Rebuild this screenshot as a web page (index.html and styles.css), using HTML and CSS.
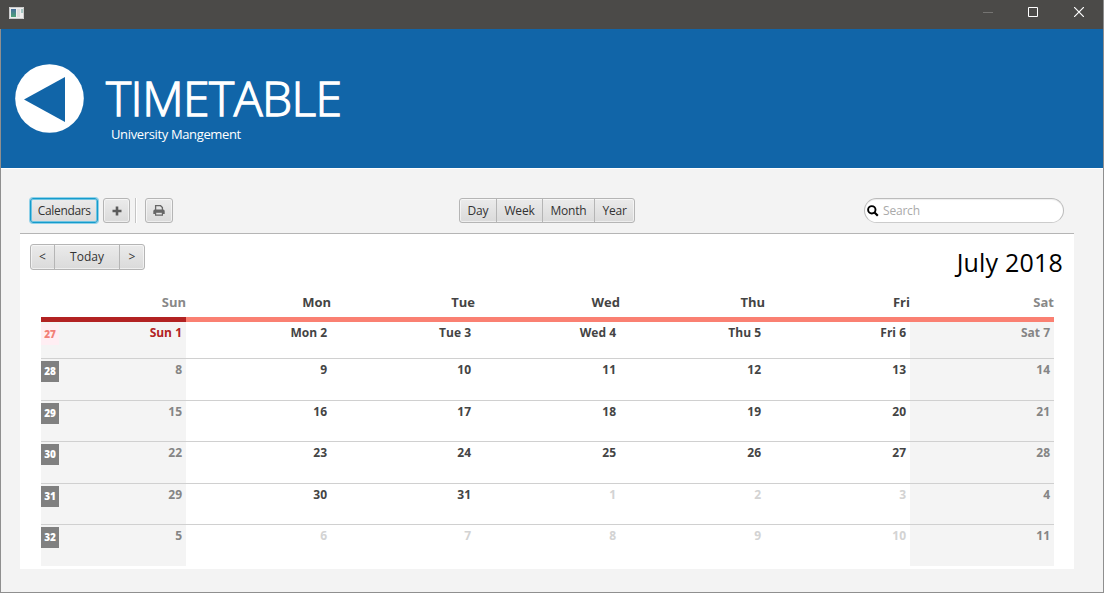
FILE: index.html
```
<!DOCTYPE html>
<html lang="en">
<head>
<meta charset="utf-8">
<title>Timetable</title>
<link rel="stylesheet" href="styles.css">
</head>
<body>
<div class="window">
  <div class="titlebar">
    <svg class="app-icon" width="15" height="12" viewBox="0 0 15 12"><defs><linearGradient id="pane" x1="0" y1="0" x2="0" y2="1"><stop offset="0" stop-color="#476f9c"/><stop offset="1" stop-color="#4fa377"/></linearGradient></defs><rect width="15" height="12" fill="#eee"/><path d="M.5 .5h14v11H.5z" fill="none" stroke="#ccc"/><rect x="2" y="2" width="5" height="8" fill="url(#pane)"/><rect x="8" y="2" width="3" height="8" fill="#ddd"/><rect x="12" y="2" width="2" height="4" fill="#a6c7c4"/></svg>
    <div class="controls">
      <svg width="11" height="10" viewBox="0 0 11 10"><path d="M1 5.5h10" stroke="#757472"/></svg>
      <svg width="10" height="10" viewBox="0 0 10 10"><path d="M.5 .5h9v9h-9z" fill="none" stroke="#fff"/></svg>
      <svg width="10" height="10" viewBox="0 0 10 10"><path d="M0 0l10 10M10 0L0 10" stroke="#fff" stroke-width="1.2"/></svg>
    </div>
  </div>
  <div class="header">
    <svg class="back" width="70" height="70" viewBox="0 0 70 70"><circle cx="34.5" cy="34.5" r="34.3" fill="#fff"/><path d="M9 35.5L50 13v45z" fill="#1165a8"/></svg>
    <div class="heading">
      <div class="title">TIMETABLE</div>
      <div class="subtitle">University Mangement</div>
    </div>
  </div>
  <div class="content">
    <div class="toolbar">
      <div class="tools">
        <div class="btn calendars">Calendars</div>
        <div class="btn add"><svg width="10" height="10" viewBox="0 0 10 10"><path d="M5 .5v9M.5 5h9" stroke="#5c5c5c" stroke-width="2.6"/></svg></div>
        <div class="sep"></div>
        <div class="btn print"><svg width="12" height="11" viewBox="0 0 12 11"><path d="M2.600 5V.7h5L9.400 2.500V5" fill="none" stroke="#666" stroke-width="1.300"/><path d="M.3 9V6.200Q.3 4.600 1.800 4.600h8.400q1.500 0 1.500 1.600V9H10v1.800H2V9z" fill="#666"/><path d="M3.200 7.800h5.600v1.700H3.200z" fill="#e2e2e2"/></svg></div>
      </div>
      <div class="group views"><div class="day">Day</div><div class="week">Week</div><div class="month">Month</div><div class="year">Year</div></div>
      <div class="search"><svg width="12" height="12" viewBox="0 0 12 12"><circle cx="4.800" cy="4.800" r="3.700" fill="none" stroke="#000" stroke-width="1.900"/><path d="M7.500 7.500l3.300 3.300" stroke="#000" stroke-width="2.200"/></svg><span>Search</span></div>
    </div>
    <div class="panel">
      <div class="panel-head">
        <div class="group nav"><div class="prev">&lt;</div><div class="today">Today</div><div class="next">&gt;</div></div>
        <div class="month-name">July 2018</div>
      </div>
      <div class="calendar">
        <div class="days names"><div class="dim">Sun</div><div>Mon</div><div>Tue</div><div>Wed</div><div>Thu</div><div>Fri</div><div class="dim">Sat</div></div>
        <div class="strip"><div class="strip-today"></div></div>
        <div class="days row first"><div class="weekend now"><b class="wk current">27</b>Sun 1</div><div>Mon 2</div><div>Tue 3</div><div>Wed 4</div><div>Thu 5</div><div>Fri 6</div><div class="weekend">Sat 7</div></div>
        <div class="days row"><div class="weekend"><b class="wk">28</b>8</div><div>9</div><div>10</div><div>11</div><div>12</div><div>13</div><div class="weekend">14</div></div>
        <div class="days row short"><div class="weekend"><b class="wk">29</b>15</div><div>16</div><div>17</div><div>18</div><div>19</div><div>20</div><div class="weekend">21</div></div>
        <div class="days row"><div class="weekend"><b class="wk">30</b>22</div><div>23</div><div>24</div><div>25</div><div>26</div><div>27</div><div class="weekend">28</div></div>
        <div class="days row short"><div class="weekend"><b class="wk">31</b>29</div><div>30</div><div>31</div><div class="other">1</div><div class="other">2</div><div class="other">3</div><div class="weekend">4</div></div>
        <div class="days row"><div class="weekend"><b class="wk">32</b>5</div><div class="other">6</div><div class="other">7</div><div class="other">8</div><div class="other">9</div><div class="other">10</div><div class="weekend">11</div></div>
      </div>
    </div>
  </div>
</div>
</body>
</html>
```
FILE: styles.css
```
* { box-sizing: border-box; }
body { margin: 0; background: #fff; font-family: "Open Sans", "Noto Sans", sans-serif; font-size: 12px; color: #333; overflow: hidden; }
svg { display: block; flex: none; }
.window { width: 1104px; height: 593px; border: solid #8f8f8f; border-width: 0 1px 1px; background: #f3f3f3; white-space: nowrap; }
.titlebar { height: 29px; margin-left: -1px; padding: 7px 19px 0 9px; background: #4b4a48; display: flex; justify-content: space-between; }
.controls { display: flex; gap: 36px; }
.controls svg:first-child { margin-right: -1px; }
.header { height: 139px; background: #1165a8; color: #fff; display: flex; padding: 35px 0 0 14px; }
.heading { padding-left: 21px; }
.title { font-size: 48px; font-weight: 300; -webkit-text-stroke: 1.3px #fff; letter-spacing: -.55px; line-height: 56px; height: 56px; margin-top: 6px; }
.subtitle { padding-left: 5px; font-size: 13px; letter-spacing: -.36px; line-height: 18px; margin-top: -1px; }
.content { border-top: 1px solid #fff; padding: 0 29px 0 19px; }
.toolbar { height: 65px; border-bottom: 1px solid #b5b5b5; padding: 28px 10px 10px 9px; display: flex; justify-content: space-between; }
.tools { display: flex; align-items: flex-start; width: 144px; padding-left: 1px; }
.btn, .group { height: 26px; border: 1px solid #b5b5b5; border-radius: 3px; background: linear-gradient(#ebebeb, #dadada); box-shadow: inset 0 0 0 1px rgba(255,255,255,.55); display: flex; align-items: center; justify-content: center; }
.calendars { width: 69px; border: 1px solid #159bcb; box-shadow: 0 0 0 1px #8fd0e8, inset 0 0 0 1px #6fc4e2; letter-spacing: -.35px; }
.tools .btn { height: 25px; margin-top: 1px; }
.tools .add { width: 27px; margin-left: 5px; }
.sep { width: 2px; height: 25px; margin: 1px 8px 0 5px; background: linear-gradient(90deg, #c5c5c5 50%, #fff 50%); }
.tools .print { width: 28px; }
.group > div { height: 24px; display: flex; align-items: center; justify-content: center; border-right: 1px solid #b5b5b5; }
.group > div:last-child { border-right: 0; }
.views { width: 176px; height: 25px; margin: 1px 0 0 143px; letter-spacing: -.2px; }
.views > div { height: 23px; }
.day { width: 37px; } .week { width: 46px; } .month { width: 52px; } .year { width: 39px; }
.search { width: 200px; height: 25px; margin: 1px 0 0 86px; border: 1px solid #bbb; border-bottom-color: #ccc; border-radius: 13px; background: #fff; box-shadow: inset 0 1px 1px #eee; display: flex; align-items: center; gap: 4px; padding-left: 2px; color: #aaa; }
.search span { letter-spacing: -.2px; }
.panel { height: 335px; background: #fff; padding: 10px 11px 0 10px; }
.panel-head { display: flex; justify-content: space-between; height: 43px; }
.nav { width: 115px; }
.nav > div { padding-bottom: 1px; }
.prev { width: 24px; } .today { width: 65px; } .next { width: 24px; }
.month-name { font-size: 25px; line-height: 37px; letter-spacing: .2px; color: #000; }
.calendar { margin: 0 9px 0 11px; }
.days { display: grid; grid-template-columns: 145px 145px 144px 145px 145px 145px 144px; text-align: right; font-weight: 700; color: #444; }
.names { height: 30px; line-height: 30px; font-size: 13px; }
.names .dim { color: #888; }
.strip { height: 5px; background: #fa8072; }
.strip-today { width: 145px; height: 5px; background: #b22222; }
.row { height: 42px; border-top: 1px solid #d0d0d0; line-height: 21px; }
.row.short { height: 41px; }
.row.first { height: 36px; border: 0; }
.row > div { padding-right: 4px; }
.row .weekend { background: #f4f4f4; color: #858585; }
.row .now { color: #b22222; }
.row .other { color: #d3d3d3; }
.wk { float: left; width: 18px; height: 21px; margin-top: 2px; text-align: center; background: #808080; color: #fff; font-size: 10px; }
.wk.current { background: #ffeef3; color: #f28078; }
```
